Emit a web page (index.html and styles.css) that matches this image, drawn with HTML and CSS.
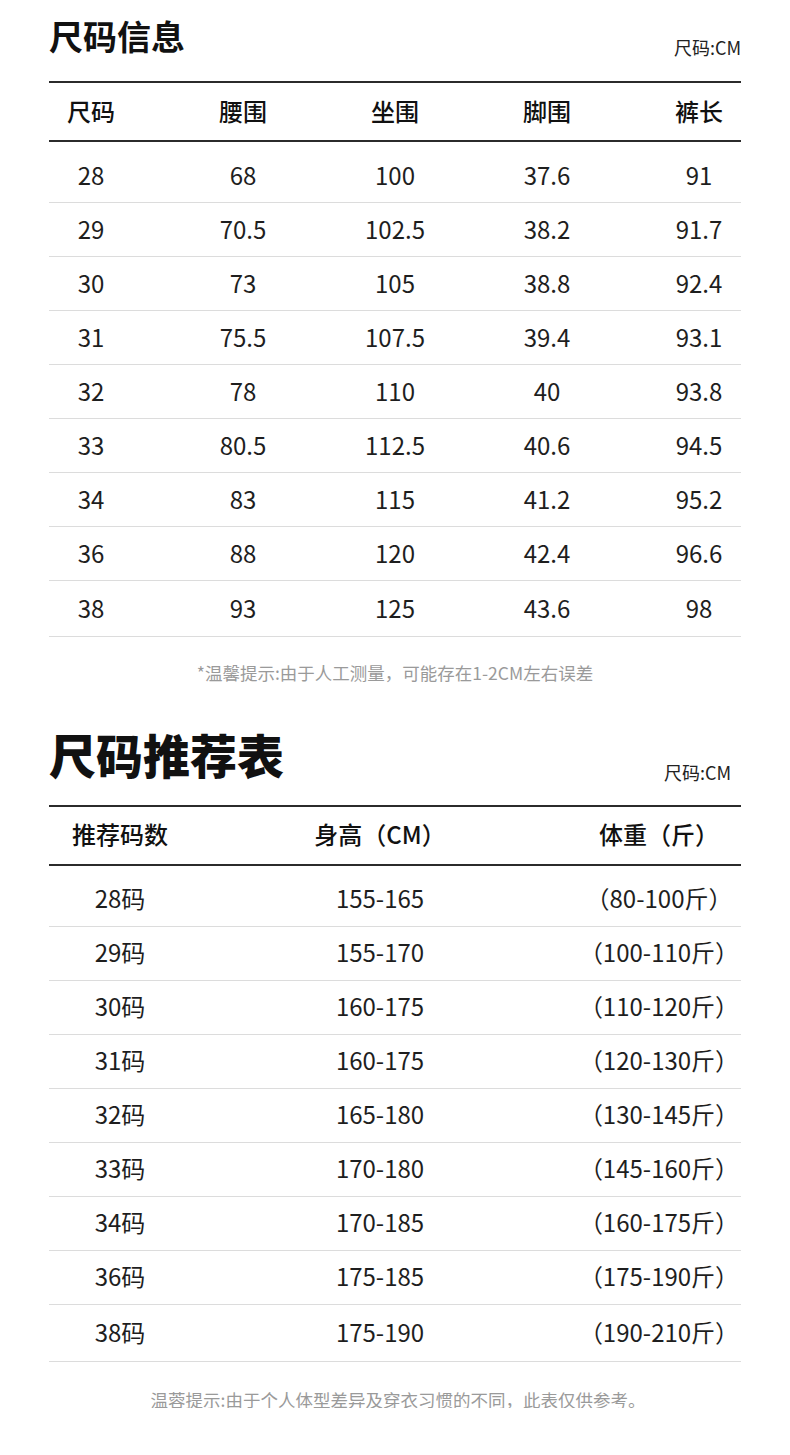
FILE: index.html
```html
<!DOCTYPE html>
<html lang="zh-CN">
<head>
<meta charset="utf-8">
<title>尺码信息</title>
<link rel="stylesheet" href="styles.css">
</head>
<body>
<div class="page">
  <section class="sec sec-info">
    <div class="head">
      <h1 class="title">尺码信息</h1>
      <span class="unit">尺码:CM</span>
    </div>
    <div class="table t5">
      <div class="row th"><span>尺码</span><span>腰围</span><span>坐围</span><span>脚围</span><span>裤长</span></div>
      <div class="body">
        <div class="row"><span>28</span><span>68</span><span>100</span><span>37.6</span><span>91</span></div>
        <div class="row"><span>29</span><span>70.5</span><span>102.5</span><span>38.2</span><span>91.7</span></div>
        <div class="row"><span>30</span><span>73</span><span>105</span><span>38.8</span><span>92.4</span></div>
        <div class="row"><span>31</span><span>75.5</span><span>107.5</span><span>39.4</span><span>93.1</span></div>
        <div class="row"><span>32</span><span>78</span><span>110</span><span>40</span><span>93.8</span></div>
        <div class="row"><span>33</span><span>80.5</span><span>112.5</span><span>40.6</span><span>94.5</span></div>
        <div class="row"><span>34</span><span>83</span><span>115</span><span>41.2</span><span>95.2</span></div>
        <div class="row"><span>36</span><span>88</span><span>120</span><span>42.4</span><span>96.6</span></div>
        <div class="row"><span>38</span><span>93</span><span>125</span><span>43.6</span><span>98</span></div>
      </div>
    </div>
    <p class="note">*温馨提示:由于人工测量，可能存在1-2CM左右误差</p>
  </section>

  <section class="sec sec-rec">
    <div class="head">
      <h1 class="title big">尺码推荐表</h1>
      <span class="unit unit-in">尺码:CM</span>
    </div>
    <div class="table t3">
      <div class="row th"><span>推荐码数</span><span>身高（CM）</span><span>体重（斤）</span></div>
      <div class="body">
        <div class="row"><span>28码</span><span>155-165</span><span>（80-100斤）</span></div>
        <div class="row"><span>29码</span><span>155-170</span><span>（100-110斤）</span></div>
        <div class="row"><span>30码</span><span>160-175</span><span>（110-120斤）</span></div>
        <div class="row"><span>31码</span><span>160-175</span><span>（120-130斤）</span></div>
        <div class="row"><span>32码</span><span>165-180</span><span>（130-145斤）</span></div>
        <div class="row"><span>33码</span><span>170-180</span><span>（145-160斤）</span></div>
        <div class="row"><span>34码</span><span>170-185</span><span>（160-175斤）</span></div>
        <div class="row"><span>36码</span><span>175-185</span><span>（175-190斤）</span></div>
        <div class="row"><span>38码</span><span>175-190</span><span>（190-210斤）</span></div>
      </div>
    </div>
    <p class="note">温蓉提示:由于个人体型差异及穿衣习惯的不同，此表仅供参考。</p>
  </section>
</div>
</body>
</html>
```

FILE: styles.css
```css
* { box-sizing: border-box; }

html, body {
  margin: 0;
  padding: 0;
  background: #ffffff;
}

body {
  font-family: "Noto Sans CJK SC", "Noto Sans", sans-serif;
  color: #1e1e1e;
}

.page {
  width: 790px;
  padding: 19px 49px 0 49px;
}

.head {
  display: flex;
  justify-content: space-between;
  align-items: flex-end;
}

.title {
  margin: 0;
  font-size: 34px;
  line-height: 1;
  font-weight: 700;
  color: #111;
}

.title.big {
  font-size: 47px;
  font-weight: 900;
}

.unit {
  font-size: 18px;
  line-height: 1;
  margin-bottom: -3px;
  color: #222;
}

.unit-in {
  margin-right: 10px;
  margin-bottom: -4px;
}

.table {
  margin-top: 28px;
  border-top: 2px solid #2b2b2b;
}

.row {
  display: grid;
  align-items: center;
  height: 54px;
  padding-bottom: 2px;
  border-bottom: 1px solid #dcdcdc;
  font-size: 24px;
  line-height: 1;
}

.row span {
  text-align: center;
  white-space: nowrap;
}

.row.th {
  height: 59px;
  border-bottom: 2px solid #2b2b2b;
  font-size: 24px;
  font-weight: 500;
  color: #111;
}

.body {
  padding-top: 7px;
}

.body .row:last-child {
  height: 56px;
}

.t5 .row {
  display: flex;
  justify-content: space-between;
}

.t5 .row span {
  width: 84px;
}

.t3 .row {
  grid-template-columns: 142px 378px 1fr;
}

.t3 .row span:nth-child(3) {
  padding-left: 8px;
}

.note {
  margin: 27px 0 0 0;
  text-align: center;
  font-size: 17.5px;
  line-height: 1;
  color: #9a9a9a;
}

.sec-rec {
  margin-top: 48px;
}

.sec-rec .table {
  margin-top: 28px;
}

.sec-rec .body .row:last-child {
  height: 57px;
}

.sec-rec .note {
  margin-top: 29px;
  padding-left: 6px;
}
```
